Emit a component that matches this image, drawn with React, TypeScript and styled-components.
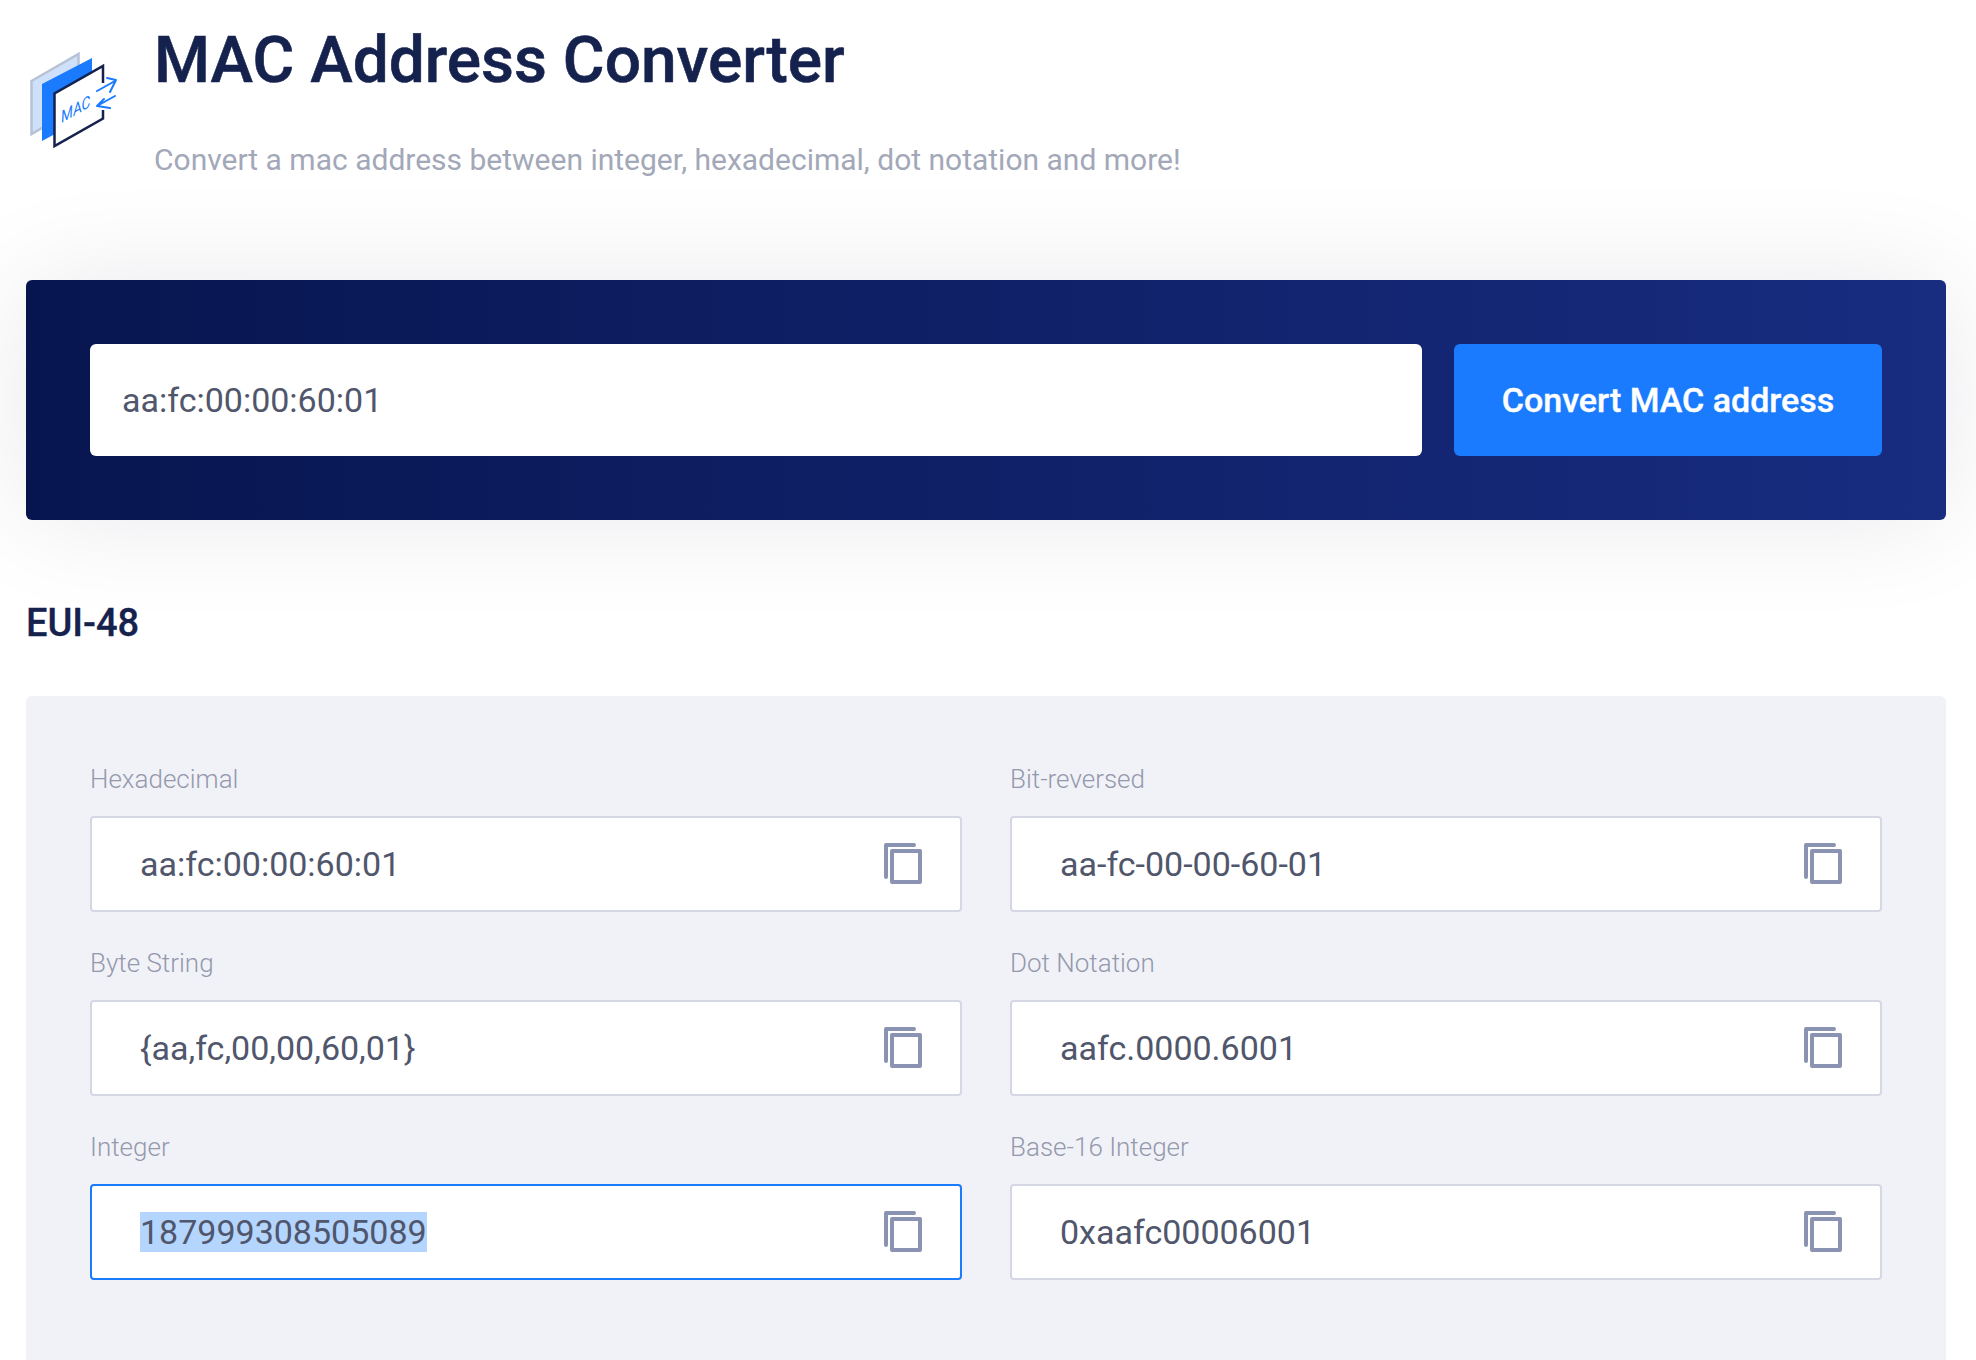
import React from "react";
import styled, { createGlobalStyle } from "styled-components";

const Global = createGlobalStyle`
  html, body { margin: 0; padding: 0; background: #fff; overflow: hidden; height: 100%; }
  * { box-sizing: border-box; }
  body { font-family: Roboto, "Liberation Sans", sans-serif; }
`;
const Page = styled.div`
  width: 1976px; height: 1360px; padding: 0 30px 0 26px; overflow: hidden;
  display: flex; flex-direction: column;
`;
const Header = styled.header`
  height: 280px; display: flex; align-items: flex-start; gap: 36px; margin-left: 2px;
`;
const LogoBox = styled.div` width: 90px; height: 100px; margin-top: 50px; flex: none; `;
const HeaderText = styled.div` display: flex; flex-direction: column; `;
const Title = styled.h1`
  margin: 24px 0 0; font-size: 64px; line-height: 74px; font-weight: 500; color: #15224e;
  -webkit-text-stroke: 0.6px #15224e;
`;
const Subtitle = styled.p`
  margin: 43px 0 0; font-size: 30px; line-height: 38px; font-weight: 400; color: #a3a8b8;
`;
const Hero = styled.form`
  height: 240px; flex: none; padding: 64px; display: flex; gap: 32px; border-radius: 6px;
  background: linear-gradient(90deg, #07154f 0%, #182c80 100%);
  box-shadow: 0 0 110px rgba(15, 20, 50, 0.09);
`;
const HeroInput = styled.input`
  flex: 1; min-width: 0; height: 112px; border: 0; border-radius: 6px; background: #fff;
  padding: 0 32px; font: 400 34px Roboto, sans-serif; color: #50566b; outline: none;
`;
const HeroButton = styled.button`
  flex: none; width: 428px; height: 112px; border: 0; border-radius: 6px; background: #1a7bff;
  color: #fff; font: 500 34px Roboto, sans-serif; -webkit-text-stroke: 0.4px #fff;
`;
const SectionTitle = styled.h2`
  margin: 78px 0 0; height: 48px; font-size: 38px; line-height: 50px; font-weight: 500; color: #15224e;
  -webkit-text-stroke: 0.3px #15224e;
`;
const Panel = styled.section`
  flex: 1; margin-top: 50px; padding: 64px 64px 0; border-radius: 6px 6px 0 0; background: #f1f2f7;
  display: grid; grid-template-columns: 1fr 1fr; column-gap: 48px; row-gap: 32px; align-content: start;
`;
const Field = styled.div` display: flex; flex-direction: column; `;
const Label = styled.label`
  height: 38px; margin-bottom: 18px; font-size: 26px; line-height: 38px; font-weight: 300; color: #9499ad;
`;
const Box = styled.div<{ $focus?: boolean }>`
  height: 96px; display: flex; align-items: center; justify-content: space-between;
  padding: 0 38px 0 48px; background: #fff; border-radius: 4px;
  border: 2px solid ${(p) => (p.$focus ? "#1a7bff" : "#d5d7e4")};
`;
const Value = styled.span<{ $selected?: boolean }>`
  display: inline-block; font-size: 34px; line-height: 40px; color: #50566b;
  background: ${(p) => (p.$selected ? "#b4d5fe" : "transparent")};
`;

const CopyIcon = () => (
  <svg width="38" height="42" viewBox="0 0 38 42" fill="none" stroke="#8a94b2" strokeWidth="4">
    <path d="M2 34V2H30" strokeLinecap="round" strokeLinejoin="round" />
    <rect x="8" y="8" width="28" height="31" strokeLinejoin="round" />
  </svg>
);

const Logo = () => (
  <svg width="90" height="100" viewBox="28 50 90 100" fill="none">
    <path d="M31.500 81 78.500 54V107L31.500 134Z" fill="#cfe0fb" stroke="#b8c2d6" strokeWidth="2.500" />
    <path d="M42 84 92 58V114L42 141Z" fill="#1a7bff" />
    <path d="M54.500 94 103 67V118L54.500 146Z" fill="#fff" />
    <path d="M103 83V66L54.500 93.500V146L103 118.500V110" stroke="#15224e" strokeWidth="2.500" />
    <text x="0" y="0" transform="matrix(.87 -.5 .1 1 61.500 123)" fill="#1a7bff" fontFamily="Roboto, sans-serif"
      fontStyle="italic" fontWeight="400" fontSize="16">MAC</text>
    <path d="M97 91 115 81M107 78 116 80 110 92M115 96 97 106M104 99 97 106 110 108" stroke="#1a7bff"
      strokeWidth="2" strokeLinecap="round" strokeLinejoin="round" />
  </svg>
);

const fields: { label: string; value: string; selected?: boolean }[] = [
  { label: "Hexadecimal", value: "aa:fc:00:00:60:01" },
  { label: "Bit-reversed", value: "aa-fc-00-00-60-01" },
  { label: "Byte String", value: "{aa,fc,00,00,60,01}" },
  { label: "Dot Notation", value: "aafc.0000.6001" },
  { label: "Integer", value: "187999308505089", selected: true },
  { label: "Base-16 Integer", value: "0xaafc00006001" },
];

export default function App() {
  return (
    <Page>
      <Global />
      <Header>
        <LogoBox><Logo /></LogoBox>
        <HeaderText>
          <Title>MAC Address Converter</Title>
          <Subtitle>Convert a mac address between integer, hexadecimal, dot notation and more!</Subtitle>
        </HeaderText>
      </Header>
      <Hero onSubmit={(e) => e.preventDefault()}>
        <HeroInput defaultValue="aa:fc:00:00:60:01" />
        <HeroButton type="submit">Convert MAC address</HeroButton>
      </Hero>
      <SectionTitle>EUI-48</SectionTitle>
      <Panel>
        {fields.map((f) => (
          <Field key={f.label}>
            <Label>{f.label}</Label>
            <Box $focus={f.selected}>
              <Value $selected={f.selected}>{f.value}</Value>
              <CopyIcon />
            </Box>
          </Field>
        ))}
      </Panel>
    </Page>
  );
}
